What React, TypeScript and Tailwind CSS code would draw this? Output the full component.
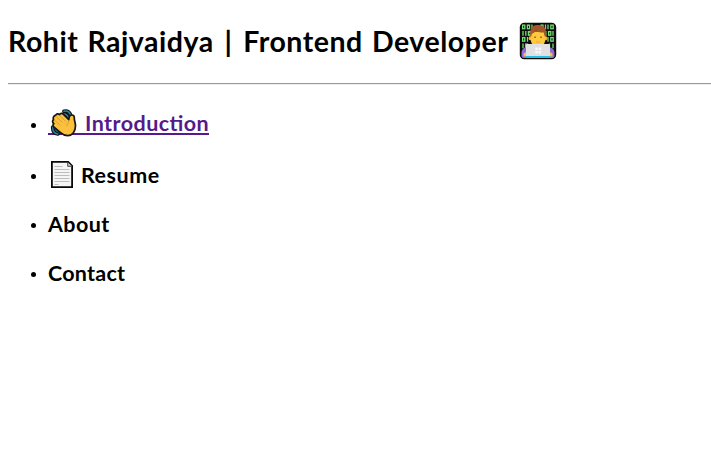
import type { ReactNode } from "react";

function Technologist() {
  return (
    <svg width="38" height="38" viewBox="0 0 38 38" className="shrink-0">
      <rect x="0.800" y="0.800" width="36.400" height="36.400" rx="4.500" fill="#0b0b0b" />
      <g stroke="#74dc74" strokeWidth="1.300" fill="none">
        <rect x="3.600" y="3.100" width="2.200" height="3.600" />
        <rect x="8.400" y="3.100" width="2.200" height="3.600" />
        <path d="M13 2.500v4.800M26.500 2.500v4.800M29 2.500v4.800" />
        <rect x="22" y="3.100" width="2" height="3.600" />
        <rect x="31.800" y="3.100" width="2.400" height="3.600" />
        <path d="M4 9v4.800M6.800 9v4.800M26.800 9v4.800M34 9v4.800" />
        <rect x="9.400" y="9.600" width="2" height="3.600" />
        <rect x="29.600" y="9.600" width="2.200" height="3.600" />
        <rect x="3.600" y="15.600" width="2.200" height="3.600" />
        <path d="M8.500 15v4.800M29 15v4.800" />
        <rect x="31.800" y="15.600" width="2.400" height="3.600" />
        <path d="M4 21.500v4.800M30.500 21.500v4.800M34 21.500v4.800" />
        <rect x="6.600" y="22.100" width="2" height="3.600" />
      </g>
      <path d="M2.500 34v-3c0-4 3-6 7-6h19c4 0 7 2 7 6v3c0 1-1 2-2 2h-29c-1 0-2-1-2-2z" fill="#8c69d4" />
      <circle cx="12" cy="16.200" r="2.300" fill="#f8b42e" />
      <circle cx="26" cy="16.200" r="2.300" fill="#f8b42e" />
      <path d="M12 9.500h14v9c0 3.500-3 6.500-7 6.500s-7-3-7-6.500z" fill="#ffc83d" />
      <path d="M11.400 14.500c-1.200-6 1-11.500 6.400-11.500 3.500 0 5 .500 6.200 1.800 3.200 1 3.600 5.200 2.600 9.700h-.900l-1-4c-3 .300-6-.500-7.800-2-1 1.800-2.200 2.700-4 3.200l-.600 2.800z" fill="#a4562b" />
      <path d="M16 14.500v1.500M22 14.500v1.500" stroke="#49362a" strokeWidth="1.100" />
      <path d="M17 19.500c1.300 1 2.700 1 4 0" fill="none" stroke="#e0a23a" strokeWidth=".800" />
      <path d="M4.500 31.500c1-1 2-1.500 3-1.500h23c1 0 2 .500 3 1.500v3h-29z" fill="#f3bf55" />
      <rect x="7" y="22" width="24" height="13.500" rx="1.200" fill="#e1e1e4" />
      <path d="M16.300 25.500h2.500V28h-2.500zM19.700 25.500h2.500V28h-2.500zM16.300 29h2.500v2.500h-2.500zM19.700 29h2.500v2.500h-2.500z" fill="#fafafa" />
      <path d="M6.500 34h25v2h-25z" fill="#28bfe6" />
    </svg>
  );
}

function WavingHand() {
  return (
    <svg width="27" height="28" viewBox="0 0 27 28" className="shrink-0">
      <g fill="none" strokeLinecap="round">
        <path d="M14 2.300c4-1 6.500 1.500 6.800 4.800M13.500 5c2.600 0 4 1.200 4.800 3.500M2.800 18c-.300 4 1.600 6.600 5 7M5.300 18.500c0 2.300 1.300 3.800 3.500 4.300" stroke="#111" strokeWidth="3.700" />
        <path d="M14 2.300c4-1 6.500 1.500 6.800 4.800M13.500 5c2.600 0 4 1.200 4.800 3.500M2.800 18c-.300 4 1.600 6.600 5 7M5.300 18.500c0 2.300 1.300 3.800 3.500 4.300" stroke="#2487a8" strokeWidth="1.500" />
      </g>
      <path d="M5.800 6.200c.800-1.600 2.400-1.700 3.700-.600 1-1.500 2.600-1.500 4-.200l5.300 5.200c.200-2.700.900-4.600 3-4.600 2 0 2.700 1.300 2.500 3.500-.100 2 1.200 4.300 1.200 7.300 0 6-3.400 9.900-7.800 9.900-3 0-5.500-1.500-7.500-3.300L3.800 18c-1-1-1.100-2.400.100-3.400-1.700-1.200-1.700-2.800-.400-4-.900-1.800.300-4 2.300-4.400z" fill="#fcc13c" stroke="#171512" strokeWidth="1.700" strokeLinejoin="round" />
      <path d="M6.500 8l6 5.500M9.700 6.500l5.800 5.700M4.200 11l6.300 5.400M18.800 11.500c0 2.500-2 3.300-2 5.800" fill="none" stroke="#cb922b" strokeWidth=".800" />
    </svg>
  );
}

function Page() {
  return (
    <svg width="22" height="28" viewBox="0 0 22 28" className="shrink-0">
      <path d="M.900.900h16.300L21.100 4.800v21.300H.900z" fill="#f5f5f5" stroke="#090909" strokeWidth="1.800" />
      <path d="M16.700 1.500v3.800H21" fill="#d0d0d0" stroke="#444" />
      <path d="M3.500 5.500h8M3.500 8.500h15M3.500 11.500h15M3.500 14.500h15M3.500 17.500h15M3.500 20.500h15M3.500 23.500h4" stroke="#bdbdbd" />
    </svg>
  );
}

function Item({ children, className }: { children: ReactNode; className: string }) {
  return (
    <li className={"flex items-center " + className}>
      <span className="mr-3 mt-0.5 size-[5px] shrink-0 rounded-full bg-black" />
      {children}
    </li>
  );
}

export default function App() {
  return (
    <main className="h-[464px] overflow-hidden bg-white pl-2 pt-[22px] font-['Lato','Liberation_Sans',sans-serif] font-bold text-black">
      <h1 className="flex h-[38px] items-center whitespace-pre text-[28.5px] leading-[38px]">
        <span className="w-[511px] tracking-[0.52px] [word-spacing:1.8px]">
          Rohit Rajvaidya <span className="px-[1.5px]">|</span> Frontend Developer
        </span>
        <Technologist />
      </h1>
      <hr className="mt-[23px] h-[2px] border-0 border-t border-[#9a9a9a] bg-[#eeeeee]" />
      <ul className="pl-[23px] text-[21.5px] leading-7">
        <Item className="mt-[23px] h-8">
          <a className="flex h-[27px] w-[161px] items-start self-start border-b-2 border-[#551a8b] text-[#551a8b]">
            <span className="ml-0.5 mr-2 mt-px h-7"><WavingHand /></span>
            <span className="mt-px tracking-[0.45px] [font-feature-settings:'liga'_1]">Introduction</span>
          </a>
        </Item>
        <Item className="mt-[19px] h-8">
          <span className="ml-[3px] mr-2 h-7"><Page /></span>
          <span className="tracking-[0.5px]">Resume</span>
        </Item>
        <Item className="mt-[19px] h-7"><span className="tracking-[0.4px]">About</span></Item>
        <Item className="mt-[21px] h-7"><span className="tracking-[0.25px]">Contact</span></Item>
      </ul>
    </main>
  );
}
